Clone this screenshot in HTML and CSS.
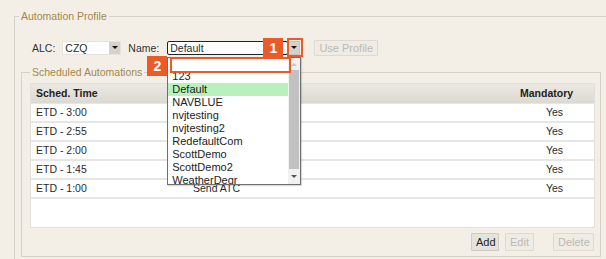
FILE: index.html
```html
<!doctype html>
<html lang="en">
<head>
<meta charset="utf-8">
<title>Automation Profile</title>
<link rel="stylesheet" href="styles.css">
</head>
<body>

<fieldset class="profile">
  <legend>Automation Profile</legend>

  <div class="controls">
    <span class="lbl">ALC:</span>
    <div class="select alc">
      <span class="val">CZQ</span>
      <span class="arrow"><i></i></span>
    </div>

    <span class="lbl name-lbl">Name:</span>
    <div class="combo">
      <div class="combo-input">Default</div>
      <span class="arrow"><i></i></span>

      <!-- open list -->
      <div class="dropdown">
        <div class="search"></div>
        <ul class="items">
          <li>123</li>
          <li class="sel">Default</li>
          <li>NAVBLUE</li>
          <li>nvjtesting</li>
          <li>nvjtesting2</li>
          <li>RedefaultCom</li>
          <li>ScottDemo</li>
          <li>ScottDemo2</li>
          <li>WeatherDegr</li>
        </ul>
        <div class="scroll">
          <span class="up"></span>
          <span class="thumb"></span>
          <span class="down"></span>
        </div>
      </div>

      <!-- callouts -->
      <span class="mark mark1"></span>
      <span class="badge b1">1</span>
      <span class="mark mark2"></span>
      <span class="badge b2">2</span>
    </div>

    <button class="btn use" disabled>Use Profile</button>
  </div>

  <fieldset class="sched">
    <legend>Scheduled Automations</legend>

    <div class="grid">
      <div class="row head">
        <div>Sched. Time</div>
        <div></div>
        <div>Mandatory</div>
      </div>
      <div class="row">
        <div>ETD - 3:00</div><div></div><div class="c">Yes</div>
      </div>
      <div class="row">
        <div>ETD - 2:55</div><div></div><div class="c">Yes</div>
      </div>
      <div class="row">
        <div>ETD - 2:00</div><div></div><div class="c">Yes</div>
      </div>
      <div class="row">
        <div>ETD - 1:45</div><div></div><div class="c">Yes</div>
      </div>
      <div class="row">
        <div>ETD - 1:00</div><div>Send ATC</div><div class="c">Yes</div>
      </div>
    </div>

    <div class="actions">
      <button class="btn add">Add</button>
      <button class="btn edit" disabled>Edit</button>
      <button class="btn del" disabled>Delete</button>
    </div>
  </fieldset>
</fieldset>

</body>
</html>
```

FILE: styles.css
```css
* { box-sizing: border-box; }

html, body {
	overflow: hidden;
}

body {
	background-color: #f3efe6;
	color: #2a2a2a;
	font-family: "Liberation Sans", Arial, sans-serif;
	font-size: 10.5px;
	margin: 0;
	padding: 10px 0 0 14px;
}

fieldset {
	border: 1px solid #d6d2c9;
	margin: 0;
}

legend {
	color: #a3874c;
	line-height: 13px;
	padding: 0 2px;
	font-size: 10.5px;
}

/* outer group */

.profile {
	width: 640px;
	height: 300px;
	padding: 0 0 0 6px;
}

.profile > legend {
	margin-left: -2px;
}

.controls {
	display: flex;
	align-items: center;
	height: 15px;
	margin-top: 17px;
	padding-left: 11px;
}

.lbl {
	color: #333;
	margin-right: 7px;
}

.name-lbl {
	margin-left: 7px;
	margin-right: 8px;
}

.select {
	display: flex;
	width: 59px;
	height: 14px;
	background: #fff;
	border: 1px solid #e6e3dc;
}

.select .val {
	flex: 1;
	padding-left: 2px;
	line-height: 12px;
}

.arrow {
	display: flex;
	align-items: center;
	justify-content: center;
	width: 12px;
	height: 14px;
	background: #d5d2cb;
	border: 1px solid #c9c5bd;
}

.select .arrow {
	height: 12px;
	width: 11px;
	border: none;
}

.arrow i {
	width: 0;
	height: 0;
	border-left: 3px solid transparent;
	border-right: 3px solid transparent;
	border-top: 3px solid #111;
}

/* name combobox */

.combo {
	position: relative;
	display: flex;
	width: 134px;
	height: 14px;
}

.combo-input {
	width: 121px;
	height: 14px;
	background: #fff;
	border: 1px solid #222;
	border-radius: 2px;
	padding-left: 2px;
	line-height: 12px;
}

.dropdown {
	position: absolute;
	left: 0;
	top: 16px;
	width: 134px;
	height: 128px;
	background: #fff;
	border: 1px solid #6e6e6e;
	box-shadow: 1px 1px 1px rgba(0,0,0,0.15);
	overflow: hidden;
}

.search {
	position: absolute;
	left: 2px;
	top: 1px;
	width: 118px;
	height: 14px;
	background: #fff;
}

.items {
	list-style: none;
	margin: 0;
	padding: 0;
	margin-top: 12px;
	width: 120px;
}

.items li {
	height: 13px;
	line-height: 13px;
	padding-left: 4px;
	font-size: 11px;
	color: #222;
}

.items li.sel {
	background: #b9f1bd;
}

.scroll {
	position: absolute;
	top: 0;
	right: 0;
	width: 12px;
	height: 126px;
	background: #f1f1f1;
}

.scroll .up,
.scroll .down {
	position: absolute;
	left: 3px;
	width: 0;
	height: 0;
	border-left: 3px solid transparent;
	border-right: 3px solid transparent;
}

.scroll .up {
	top: 5px;
	border-bottom: 3px solid #c8c8c8;
}

.scroll .down {
	bottom: 6px;
	border-top: 3px solid #555;
}

.scroll .thumb {
	position: absolute;
	left: 1px;
	top: 12px;
	width: 10px;
	height: 99px;
	background: #c1c1c1;
}

/* callouts */

.mark {
	position: absolute;
	border: 2px solid #ec5b27;
}

.mark1 {
	left: 120px;
	top: -3px;
	width: 16px;
	height: 19px;
}

.mark2 {
	left: 3px;
	top: 16px;
	width: 121px;
	height: 16px;
}

.badge {
	position: absolute;
	width: 20px;
	height: 20px;
	background: #ec5b27;
	color: #fff;
	font-weight: bold;
	font-size: 14px;
	line-height: 20px;
	text-align: center;
}

.b1 {
	left: 96px;
	top: -3px;
}

.b2 {
	left: -20px;
	top: 15px;
}

/* buttons */

.btn {
	font-family: inherit;
	font-size: 11px;
	height: 18px;
	padding: 0 4px;
	background: #e6e3dc;
	color: #222;
	border: 1px solid #d0ccc4;
	border-radius: 1px;
}

.btn:disabled {
	background: #efece5;
	color: #bcb9b2;
	border-color: #dedad2;
}

.use {
	margin-left: 13px;
	width: 64px;
	height: 16px;
}

/* scheduled automations */

.sched {
	width: 580px;
	margin-top: 11px;
	padding: 4px 5px 5px 8px;
}

.grid {
	height: 145px;
	width: 565px;
	background: #fff;
	border: 1px solid #e2e0db;
}

.row {
	display: grid;
	grid-template-columns: 157px 327px 79px;
	height: 19px;
	line-height: 17px;
	border-bottom: 2px solid #e6e6e6;
}

.row div {
	padding-left: 5px;
	white-space: nowrap;
}

.row .c {
	padding-left: 0;
	text-align: center;
}

.row.head {
	height: 20px;
	line-height: 19px;
	font-weight: bold;
	color: #222;
	background: linear-gradient(#ece9e3, #dcd9d2);
	border-bottom: 1px solid #e8e6e1;
}

.actions {
	display: flex;
	justify-content: flex-end;
	margin-top: 5px;
	padding-right: 1px;
}

.add {
	width: 28px;
}

.edit {
	width: 29px;
	margin-left: 6px;
}

.del {
	width: 41px;
	margin-left: 19px;
}
```
